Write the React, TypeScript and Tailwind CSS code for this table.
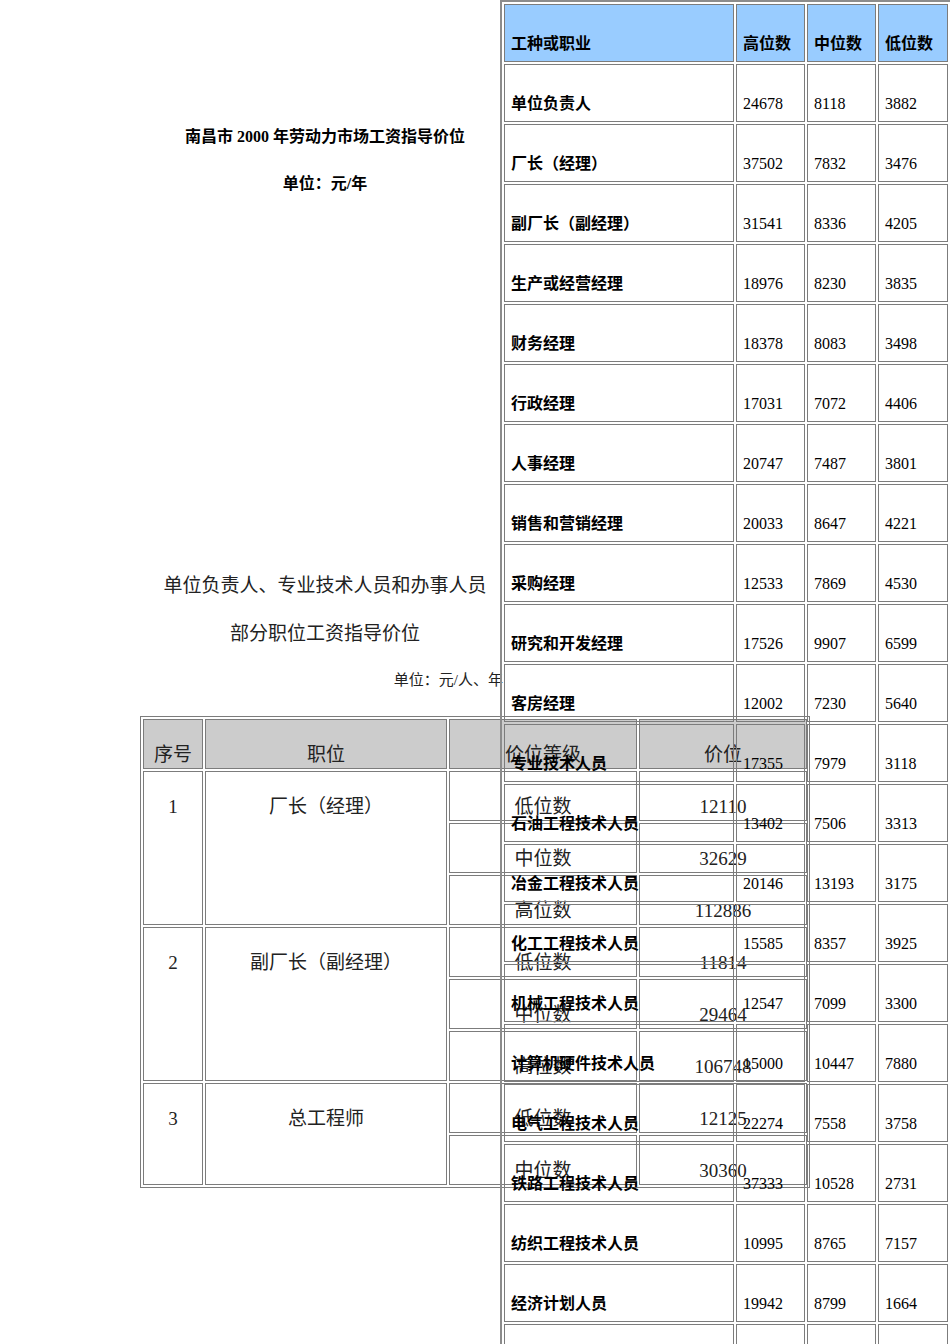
import React from "react";

const rightRows: [string, string, string, string][] = [
  ["单位负责人", "24678", "8118", "3882"],
  ["厂长（经理）", "37502", "7832", "3476"],
  ["副厂长（副经理）", "31541", "8336", "4205"],
  ["生产或经营经理", "18976", "8230", "3835"],
  ["财务经理", "18378", "8083", "3498"],
  ["行政经理", "17031", "7072", "4406"],
  ["人事经理", "20747", "7487", "3801"],
  ["销售和营销经理", "20033", "8647", "4221"],
  ["采购经理", "12533", "7869", "4530"],
  ["研究和开发经理", "17526", "9907", "6599"],
  ["客房经理", "12002", "7230", "5640"],
  ["专业技术人员", "17355", "7979", "3118"],
  ["石油工程技术人员", "13402", "7506", "3313"],
  ["冶金工程技术人员", "20146", "13193", "3175"],
  ["化工工程技术人员", "15585", "8357", "3925"],
  ["机械工程技术人员", "12547", "7099", "3300"],
  ["计算机硬件技术人员", "15000", "10447", "7880"],
  ["电气工程技术人员", "22274", "7558", "3758"],
  ["铁路工程技术人员", "37333", "10528", "2731"],
  ["纺织工程技术人员", "10995", "8765", "7157"],
  ["经济计划人员", "19942", "8799", "1664"],
];

type Group = { no: string; name: string; levels: [string, string][] };

const groups: Group[] = [
  {
    no: "1",
    name: "厂长（经理）",
    levels: [
      ["低位数", "12110"],
      ["中位数", "32629"],
      ["高位数", "112886"],
    ],
  },
  {
    no: "2",
    name: "副厂长（副经理）",
    levels: [
      ["低位数", "11814"],
      ["中位数", "29464"],
      ["高位数", "106748"],
    ],
  },
  {
    no: "3",
    name: "总工程师",
    levels: [
      ["低位数", "12125"],
      ["中位数", "30360"],
    ],
  },
];

const rCell = "border border-[#7c7c7c] align-bottom pl-[6px] pb-[7px] leading-[20px] whitespace-nowrap overflow-hidden";
const lCell = "border border-[#7c7c7c] align-top text-center pt-[24px] leading-[22px] whitespace-nowrap";

export default function App() {
  return (
    <div className="relative w-[950px] h-[1344px] overflow-hidden bg-white text-black font-['Liberation_Serif','Noto_Sans_CJK_SC',serif]">
      {/* left document flow */}
      <div className="w-[650px] text-center">
        <p className="pt-[125px] text-[16px] leading-[24px] font-bold">南昌市 2000 年劳动力市场工资指导价位</p>
        <p className="mt-[23px] text-[16px] leading-[24px] font-bold">单位：元/年</p>
        <p className="mt-[376px] text-[19px] leading-[28px] text-[#222]">单位负责人、专业技术人员和办事人员</p>
        <p className="mt-[20px] text-[19px] leading-[28px] text-[#222]">部分职位工资指导价位</p>
        <p className="mt-[21px] w-[503px] text-right text-[15px] leading-[22px] text-[#222]">单位：元/人、年</p>
      </div>
      <table className="mt-[25px] ml-[140px] w-[670px] table-fixed border-separate border-spacing-[2px] border border-[#7c7c7c] text-[19px] text-[#222]">
        <colgroup>
          <col className="w-[60px]" />
          <col className="w-[242px]" />
          <col className="w-[188px]" />
          <col className="w-[168px]" />
        </colgroup>
        <tbody>
          <tr className="h-[50px]">
            <td className={`${lCell} bg-[#cccccc]`}>序号</td>
            <td className={`${lCell} bg-[#cccccc]`}>职位</td>
            <td className={`${lCell} bg-[#cccccc]`}>价位等级</td>
            <td className={`${lCell} bg-[#cccccc]`}>价位</td>
          </tr>
          {groups.map((g) =>
            g.levels.map((lv, i) => (
              <tr key={g.no + lv[0]} className="h-[50px]">
                {i === 0 && (
                  <>
                    <td rowSpan={g.levels.length} className={lCell}>
                      {g.no}
                    </td>
                    <td rowSpan={g.levels.length} className={lCell}>
                      {g.name}
                    </td>
                  </>
                )}
                <td className={lCell}>{lv[0]}</td>
                <td className={lCell}>{lv[1]}</td>
              </tr>
            ))
          )}
        </tbody>
      </table>

      {/* right table overlaying the page */}
      <table className="absolute left-[500px] top-0 w-[452px] table-fixed border-separate border-spacing-[2px] border-2 border-[#8c8c8c] text-[16px] text-black">
        <colgroup>
          <col className="w-[230px]" />
          <col className="w-[69px]" />
          <col className="w-[69px]" />
          <col className="w-[70px]" />
        </colgroup>
        <tbody>
          <tr className="h-[58px]">
            <td className={`${rCell} bg-[#99ccff] font-bold`}>工种或职业</td>
            <td className={`${rCell} bg-[#99ccff] font-bold`}>高位数</td>
            <td className={`${rCell} bg-[#99ccff] font-bold`}>中位数</td>
            <td className={`${rCell} bg-[#99ccff] font-bold`}>低位数</td>
          </tr>
          {rightRows.map((r) => (
            <tr key={r[0]} className="h-[58px]">
              <td className={`${rCell} font-bold`}>{r[0]}</td>
              <td className={rCell}>{r[1]}</td>
              <td className={rCell}>{r[2]}</td>
              <td className={rCell}>{r[3]}</td>
            </tr>
          ))}
          <tr className="h-[58px]">
            <td className={rCell}></td>
            <td className={rCell}></td>
            <td className={rCell}></td>
            <td className={rCell}></td>
          </tr>
        </tbody>
      </table>
    </div>
  );
}
